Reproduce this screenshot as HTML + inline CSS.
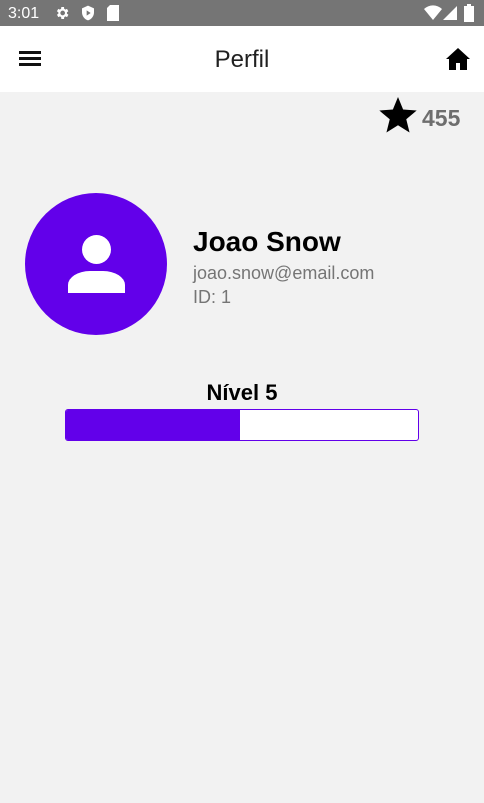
<!DOCTYPE html>
<html><head><meta charset="utf-8"><style>
body{margin:0;width:484px;height:803px;background:#f2f2f2;font-family:"Liberation Sans",sans-serif;position:relative;overflow:hidden}
.sb{position:absolute;left:0;top:0;width:484px;height:26px;background:#757575;color:#fff;font-size:16px}
.ab{position:absolute;left:0;top:26px;width:484px;height:66px;background:#fff}
.a{position:absolute}
</style></head><body>
<div class="sb">
<span class="a" style="left:8px;top:5px">3:01</span>
<svg class="a" style="left:54px;top:5px" width="16" height="16" viewBox="0 0 24 24"><path fill="#fff" d="M19.4 13a7.5 7.5 0 000-2l2.1-1.6-2-3.5-2.5 1a7 7 0 00-1.7-1L15 3h-4l-.4 2.9a7 7 0 00-1.7 1l-2.5-1-2 3.5L6.6 11a7.5 7.5 0 000 2l-2.1 1.6 2 3.5 2.5-1a7 7 0 001.7 1L11 21h4l.4-2.9a7 7 0 001.7-1l2.5 1 2-3.5zM13 15.5a3.5 3.5 0 110-7 3.5 3.5 0 010 7z"/></svg>
<svg class="a" style="left:80px;top:5px" width="16" height="16" viewBox="0 0 24 24"><path fill="#fff" d="M12 1L3 5v6c0 5.5 3.8 10.7 9 12 5.2-1.3 9-6.5 9-12V5z"/><path fill="#757575" d="M10 8v8l6-4z"/></svg>
<svg class="a" style="left:106px;top:5px" width="14" height="16" viewBox="0 0 14 16"><path fill="#fff" d="M4 0h9v16H1V3z"/></svg>
<svg class="a" style="left:424px;top:5px" width="18" height="16" viewBox="0 0 18 16"><path fill="#fff" d="M0 4a13 13 0 0118 0L9 15z"/></svg>
<svg class="a" style="left:443px;top:6px" width="14" height="14" viewBox="0 0 14 14"><path fill="#fff" d="M14 0v14H0z"/></svg>
<svg class="a" style="left:464px;top:4px" width="10" height="18" viewBox="0 0 10 18"><path fill="#fff" d="M3 0h4v2h3v16H0V2h3z"/></svg>
</div>
<div class="ab">
<div class="a" style="left:19px;top:25px;width:22px;height:3px;background:#111;box-shadow:0 6px #111,0 12px #111"></div>
<div class="a" style="left:0;width:484px;top:20px;text-align:center;font-size:24px;color:#212121">Perfil</div>
<svg class="a" style="left:446px;top:22px" width="24" height="22" viewBox="0 0 24 22"><path fill="#000" d="M12 0L0 11h3v11h7v-7h4v7h7V11h3z"/></svg>
</div>
<svg class="a" style="left:378px;top:97px" width="40" height="38" viewBox="0 0 24 23"><path fill="#000" d="M12 0l3.1 7.6 8.2.6-6.3 5.3 2 8L12 17.1 5 21.5l2-8L.7 8.2l8.2-.6z"/></svg>
<div class="a" style="left:422px;top:105px;font-size:23px;font-weight:bold;color:#6e6e6e">455</div>
<div class="a" style="left:25px;top:193px;width:142px;height:142px;border-radius:50%;background:#6200ea"></div>
<div class="a" style="left:82px;top:235px;width:29px;height:29px;border-radius:50%;background:#fff"></div>
<div class="a" style="left:68px;top:271px;width:57px;height:22px;border-radius:22px 22px 0 0/14px 14px 0 0;background:#fff"></div>
<div class="a" style="left:193px;top:226px;font-size:28px;font-weight:bold;color:#000">Joao Snow</div>
<div class="a" style="left:193px;top:263px;font-size:18px;color:#757575">joao.snow@email.com</div>
<div class="a" style="left:193px;top:287px;font-size:18px;color:#757575">ID: 1</div>
<div class="a" style="left:0;width:484px;top:380px;text-align:center;font-size:22px;font-weight:bold;color:#000">Nível 5</div>
<div class="a" style="left:65px;top:409px;width:352px;height:30px;border:1px solid #6200ea;border-radius:3px;background:#fff;overflow:hidden"><div style="width:174px;height:100%;background:#6200ea"></div></div>
</body></html>
